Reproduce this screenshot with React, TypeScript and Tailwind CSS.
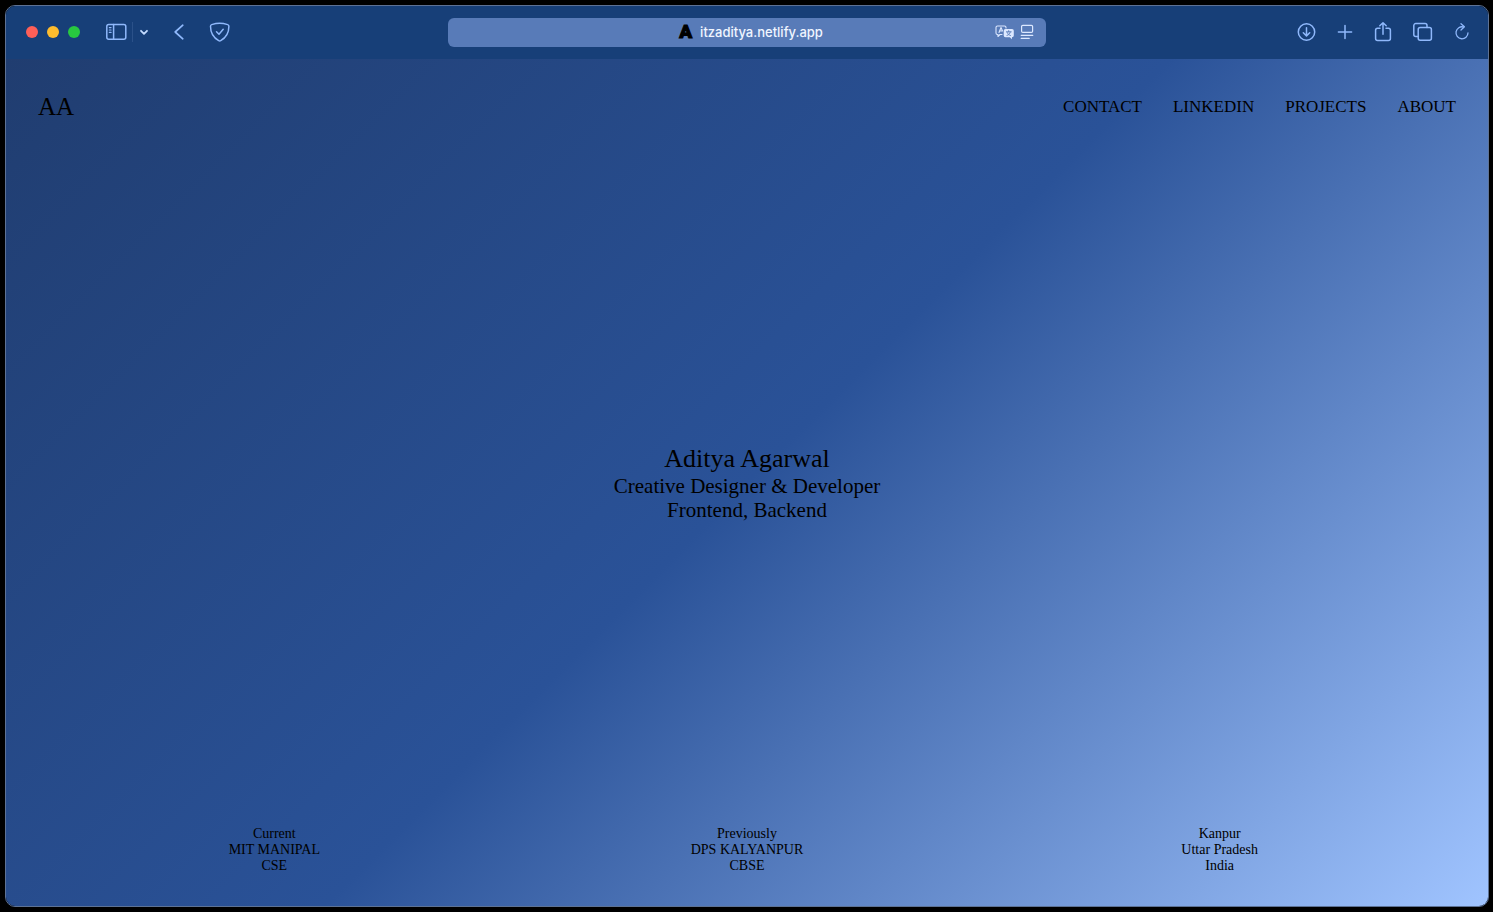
import type { ReactNode } from 'react'

const navLinks = [
  { label: 'CONTACT', href: '#contact' },
  { label: 'LINKEDIN', href: '#linkedin' },
  { label: 'PROJECTS', href: '#projects' },
  { label: 'ABOUT', href: '#about' },
]

const details = [
  ['Current', 'MIT MANIPAL', 'CSE'],
  ['Previously', 'DPS KALYANPUR', 'CBSE'],
  ['Kanpur', 'Uttar Pradesh', 'India'],
]

interface IconButtonProps {
  label: string
  className?: string
  children: ReactNode
}

function IconButton({ label, className = 'w-6', children }: IconButtonProps) {
  return (
    <button
      type="button"
      aria-label={label}
      className={`flex h-6 shrink-0 items-center justify-center text-[#8fb8fb] ${className}`}
    >
      {children}
    </button>
  )
}

interface IconProps {
  width?: number
  height?: number
  stroke?: number
  children: ReactNode
}

function Icon({ width = 24, height = 24, stroke = 1.5, children }: IconProps) {
  return (
    <svg
      width={width}
      height={height}
      viewBox={`0 0 ${width} ${height}`}
      fill="none"
      stroke="currentColor"
      strokeWidth={stroke}
      strokeLinecap="round"
      strokeLinejoin="round"
      aria-hidden="true"
      className="shrink-0"
    >
      {children}
    </svg>
  )
}

function Toolbar() {
  return (
    <div className="grid h-[53px] shrink-0 grid-cols-[1fr_minmax(0,598px)_1fr] items-center bg-[#173f78] pb-px">
      {/* Left controls */}
      <div className="flex items-center pl-5">
        <div className="flex gap-[9px]">
          <button type="button" aria-label="Close" className="size-3 rounded-full bg-[#fe5f58]" />
          <button type="button" aria-label="Minimize" className="size-3 rounded-full bg-[#febc2e]" />
          <button type="button" aria-label="Zoom" className="size-3 rounded-full bg-[#28c840]" />
        </div>
        <div className="ml-6 flex items-center">
          <IconButton label="Sidebar">
            <Icon>
              <rect x="2.8" y="4.6" width="19" height="14.6" rx="2" />
              <path d="M9.6 4.6v14.6" />
              <path d="M5.3 7.6h1.8M5.3 10h1.8M5.3 12.4h1.8" strokeWidth="1.1" />
            </Icon>
          </IconButton>
          <div className="ml-1 h-5 w-px bg-[#2b5189]" />
          <button
            type="button"
            aria-label="Tab groups"
            className="ml-1 flex h-6 w-[14px] items-center justify-center text-[#c3dbff]"
          >
            <Icon width={12} height={12} stroke={1.8}>
              <path d="M3 4.8 6 7.8l3-3" />
            </Icon>
          </button>
        </div>
        <div className="ml-4 flex items-center gap-4">
          <IconButton label="Back">
            <Icon stroke={1.7}>
              <path d="M15.8 5.2 8.2 12l7.6 6.8" />
            </Icon>
          </IconButton>
          <IconButton label="Privacy report">
            <Icon>
              <path d="M12.7 3.3c3 0 6 .7 8 1.3.8.3 1.2.8 1.2 1.6 0 7.6-3.2 11.6-8.2 14.4-.7.4-1.3.4-2 0-5-2.8-8.2-6.8-8.2-14.4 0-.8.4-1.3 1.2-1.6 2-.6 5-1.3 8-1.3Z" />
              <path d="m9.5 11.7 2.5 2.5 4.2-5" />
            </Icon>
          </IconButton>
        </div>
      </div>

      {/* Address bar */}
      <div className="grid h-[29px] grid-cols-[1fr_auto_1fr] items-center rounded-md bg-[#587bb8]">
        <span />
        <div className="flex items-center gap-2 pl-2">
          <span className="w-[13px] text-center font-[Roboto,sans-serif] text-[19px] leading-5 font-black text-black [-webkit-text-stroke:1px_black]">
            A
          </span>
          <span className="font-[Inter,sans-serif] text-[13px] leading-5 font-medium text-[#f0f5ff]">
            itzaditya.netlify.app
          </span>
        </div>
        <div className="flex items-center justify-end gap-[5px] pr-3 text-[#dce8ff]">
          <button type="button" aria-label="Translate" className="flex">
            <Icon width={20} height={16} stroke={1.1}>
              <path d="M7 10.5H5l-2 2v-2h-.5A1.5 1.5 0 0 1 1 9V3.5A1.5 1.5 0 0 1 2.5 2h7A1.5 1.5 0 0 1 11 3.5V4" />
              <path d="m4 8.5 2-5 1.5 3.5M4.7 7h2.6" />
              <path
                d="M10.5 5H17a1.8 1.8 0 0 1 1.8 1.8v4.7a1.8 1.8 0 0 1-1.8 1.8v1.9l-2.2-1.9h-4.3a1.8 1.8 0 0 1-1.8-1.8V6.8A1.8 1.8 0 0 1 10.5 5Z"
                fill="currentColor"
                stroke="none"
              />
              <path
                d="M11.4 7.8h4.8M13.7 6.6v1.2M12 11.4c2-.6 3-1.7 3.2-3.2M12.2 8.5c.6 1.5 1.7 2.5 3.2 3"
                stroke="#587bb8"
                strokeWidth="0.9"
              />
            </Icon>
          </button>
          <button type="button" aria-label="Reader" className="flex">
            <Icon width={14} height={16} stroke={1.2}>
              <rect x="1.6" y="1.4" width="11" height="7" rx="1.2" />
              <path d="M1.2 11.3h11.6M1.2 14.4h8" />
            </Icon>
          </button>
        </div>
      </div>

      {/* Right controls */}
      <div className="flex items-center justify-end gap-4 pr-[14px]">
        <IconButton label="Downloads">
          <Icon>
            <circle cx="12.5" cy="12" r="8.2" />
            <path d="M12.5 7.8v8M9.3 12.7l3.2 3.2 3.2-3.2" />
          </Icon>
        </IconButton>
        <IconButton label="New tab" className="w-[22px]">
          <Icon>
            <path d="M12 5.4v13.2M5.4 12h13.2" />
          </Icon>
        </IconButton>
        <IconButton label="Share" className="w-[22px]">
          <Icon>
            <path d="M9 8.2H6.6a2 2 0 0 0-2 2v8.4a2 2 0 0 0 2 2h10.8a2 2 0 0 0 2-2v-8.4a2 2 0 0 0-2-2H15" />
            <path d="M12 14.2V2.8M8.8 5.8 12 2.7l3.2 3.1" />
          </Icon>
        </IconButton>
        <IconButton label="Tab overview">
          <Icon>
            <rect x="8.2" y="7.4" width="13.2" height="12.8" rx="2" />
            <path d="M8.2 16.4H5.8a2 2 0 0 1-2-2V5.6a2 2 0 0 1 2-2H15a2 2 0 0 1 2 2v1.8" />
          </Icon>
        </IconButton>
        <IconButton label="Reload">
          <Icon stroke={1.3}>
            <path d="M13.6 7a6 6 0 1 0 4.4 5.8" />
            <path d="m11 3.8 3.4 3-3.4 3.2" />
          </Icon>
        </IconButton>
      </div>
    </div>
  )
}

export default function App() {
  return (
    <div className="flex min-h-screen flex-col bg-black pt-[5px] pr-1 pb-[5px] pl-[5px]">
      <div className="flex flex-1 flex-col overflow-hidden rounded-[10px] border border-[#5d7295]">
        <Toolbar />

        <div className="flex flex-1 flex-col bg-[linear-gradient(135deg,#203d70_0%,#2a5298_50%,#a0c4ff_100%)] font-['Liberation_Serif',serif] text-black">
          <header className="flex items-center justify-between p-8">
            <a href="#home" className="text-[25px] leading-8">
              AA
            </a>
            <nav className="flex gap-[31px] text-[17px] leading-6">
              {navLinks.map((link) => (
                <a key={link.label} href={link.href}>
                  {link.label}
                </a>
              ))}
            </nav>
          </header>

          <main className="flex flex-1 flex-col items-center justify-center text-center">
            <h1 className="text-[26px] leading-[30px]">Aditya Agarwal</h1>
            <p className="text-[21px] leading-6">Creative Designer &amp; Developer</p>
            <p className="text-[21px] leading-6">Frontend, Backend</p>
          </main>

          <footer className="grid grid-cols-3 px-8 pt-4 pb-8 text-center text-[14px] leading-4">
            {details.map((lines) => (
              <div key={lines[0]}>
                {lines.map((line) => (
                  <p key={line}>{line}</p>
                ))}
              </div>
            ))}
          </footer>
        </div>
      </div>
    </div>
  )
}
